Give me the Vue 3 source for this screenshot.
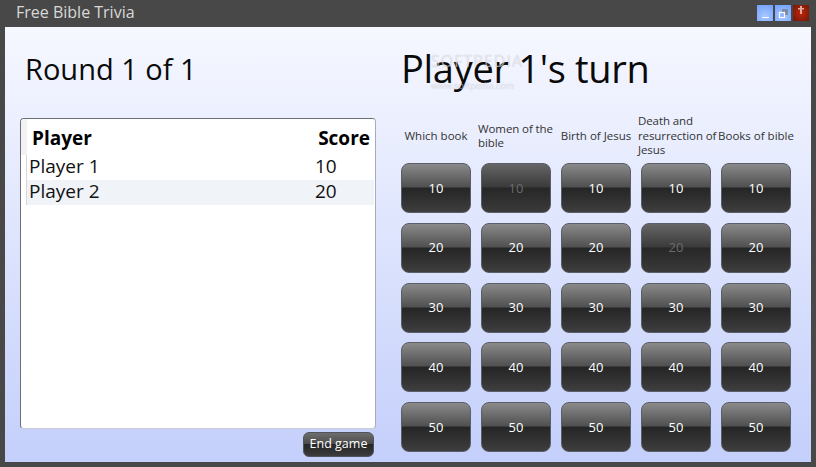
<template>
  <div class="window">
    <header class="titlebar">
      <span class="app-title">Free Bible Trivia</span>
      <div class="win-buttons">
        <button class="win-btn blue">
          <svg viewBox="0 0 16 16" width="16" height="16"><rect x="5" y="12" width="7" height="1" fill="#fff" /></svg>
        </button>
        <button class="win-btn blue">
          <svg viewBox="0 0 16 16" width="16" height="16">
            <rect x="7" y="4" width="6" height="6" fill="#7d8ba5" />
            <rect x="4.5" y="7.5" width="5" height="5" fill="#8db4ff" stroke="#fff" stroke-width="1.2" />
          </svg>
        </button>
        <button class="win-btn red">
          <svg viewBox="0 0 16 16" width="16" height="16">
            <rect x="7" y="1" width="2" height="8" fill="#e0a898" />
            <rect x="5" y="3" width="6" height="1.5" fill="#e0a898" />
          </svg>
        </button>
      </div>
    </header>

    <main class="content">
      <section class="left">
        <h1 class="round">Round 1 of 1</h1>
        <div class="table-box">
          <div class="table-head">
            <span>Player</span>
            <span>Score</span>
          </div>
          <div v-for="(p, i) in players" :key="p.name" :class="['row', { alt: i % 2 === 1 }]">
            <span class="row-name">{{ p.name }}</span>
            <span class="row-score">{{ p.score }}</span>
          </div>
        </div>
        <div class="actions">
          <button class="end-btn">End game</button>
        </div>
      </section>

      <section class="right">
        <div class="turn-wrap">
          <h1 class="turn">Player 1's turn</h1>
          <div class="mark">
            <span class="mark-big">SOFTPEDIA</span>
            <span class="mark-small">www.softpedia.com</span>
          </div>
        </div>
        <div class="cats">
          <div v-for="c in categories" :key="c.title" :class="['cat', { wrapped: c.wrapped }]">
            <span>{{ c.title }}</span>
          </div>
        </div>
        <div class="board">
          <template v-for="v in values" :key="v">
            <button
              v-for="(c, ci) in categories"
              :key="c.title"
              :class="['tile', { used: isUsed(v, ci) }]"
            >{{ v }}</button>
          </template>
        </div>
      </section>
    </main>
  </div>
</template>

<script setup>
const players = [
  { name: 'Player 1', score: 10 },
  { name: 'Player 2', score: 20 }
]

const categories = [
  { title: 'Which book' },
  { title: 'Women of the bible', wrapped: true },
  { title: 'Birth of Jesus' },
  { title: 'Death and resurrection of Jesus', wrapped: true },
  { title: 'Books of bible' }
]

const values = [10, 20, 30, 40, 50]

// questions already answered
const isUsed = (v, col) => (v === 10 && col === 1) || (v === 20 && col === 3)
</script>

<style>
html, body {
  margin: 0;
  background: #484848;
}
</style>

<style scoped>
.window {
  width: 816px;
  height: 467px;
  box-sizing: border-box;
  background: #484848;
  padding: 0 5px 5px;
  display: flex;
  flex-direction: column;
  font-family: "Open Sans", "Noto Sans", sans-serif;
  overflow: hidden;
}

.titlebar {
  height: 27px;
  flex: none;
  display: flex;
  justify-content: space-between;
  align-items: flex-start;
}

.app-title {
  margin-left: 11px;
  margin-top: 2px;
  font-size: 16px;
  line-height: 20px;
  color: #d8d8d8;
}

.win-buttons {
  display: flex;
  gap: 2px;
  margin-top: 5px;
  margin-right: 2px;
}

.win-btn {
  width: 16px;
  height: 16px;
  padding: 0;
  border: none;
  display: block;
}

.win-btn svg {
  display: block;
}

.blue {
  background: radial-gradient(circle at 50% 70%, #a9c8ff, #6f9fff);
}

.red {
  background: radial-gradient(circle at 50% 50%, #c02408, #6e1a08);
}

.content {
  flex: 1;
  display: flex;
  min-height: 0;
  background: linear-gradient(180deg, #f6f8ff 0%, #c4cffb 100%);
}

.left {
  width: 396px;
  flex: none;
  box-sizing: border-box;
  padding: 0 25px 0 15px;
  display: flex;
  flex-direction: column;
}

.round {
  margin: 24px 0 0 5px;
  height: 67px;
  font-size: 29px;
  line-height: 36px;
  font-weight: 400;
  color: #0a0a0a;
}

.table-box {
  width: 356px;
  height: 311px;
  box-sizing: border-box;
  background: #fff;
  border: 1px solid #6c6f78;
  border-bottom-color: #c8ccd8;
  border-right-color: #a8acb8;
  border-radius: 4px;
  padding-right: 1px;
  overflow: hidden;
}

.table-head {
  height: 36px;
  display: flex;
  justify-content: space-between;
  align-items: center;
  padding: 1px 4px 0 11px;
  box-sizing: border-box;
  font-size: 19px;
  font-weight: 700;
  color: #000;
  background: linear-gradient(90deg, #f2f2f2 6px, #fff 6px);
}

.row {
  height: 25px;
  box-sizing: border-box;
  padding: 0 0 3px 2px;
  margin-left: 5px;
  display: flex;
  align-items: center;
  font-size: 19px;
  color: #111;
  border-left: 1px solid #d8d8d8;
}

.row.alt {
  background: #f0f3f8;
}

.row-name {
  width: 286px;
}

.actions {
  display: flex;
  justify-content: flex-end;
  margin-top: 3px;
  padding-right: 2px;
}

.end-btn {
  width: 71px;
  height: 25px;
  padding: 0 0 2px;
  border: 1px solid #50545c;
  border-radius: 6px;
  background: linear-gradient(180deg, #6e6e6e 0%, #4a4a4a 48%, #262626 50%, #3c3c3c 100%);
  color: #fff;
  font-family: inherit;
  font-size: 12.5px;
}

.right {
  flex: 1;
  display: flex;
  flex-direction: column;
}

.turn-wrap {
  position: relative;
  height: 84px;
  flex: none;
}

.turn {
  margin: 14px 0 0;
  font-size: 38px;
  line-height: 54px;
  letter-spacing: -0.3px;
  font-weight: 400;
  color: #0a0a0a;
}

.mark {
  position: absolute;
  left: 30px;
  top: 24px;
  display: flex;
  flex-direction: column;
  color: rgba(255, 255, 255, 0.5);
  text-shadow: 0 0 1px rgba(120, 120, 130, 0.4);
}

.mark-big {
  font-size: 16px;
  line-height: 20px;
  letter-spacing: 1px;
}

.mark-small {
  font-size: 9px;
  line-height: 12px;
  margin-top: 9px;
}

.cats {
  height: 52px;
  flex: none;
  display: grid;
  grid-template-columns: repeat(5, 70px);
  column-gap: 10px;
}

.cat {
  display: flex;
  align-items: center;
  justify-content: center;
  margin: 0 -5px;
  padding-bottom: 2px;
  font-size: 11.5px;
  line-height: 14.5px;
  color: #333;
}

.cat.wrapped {
  justify-content: flex-start;
  margin: 0 -7px 0 -3px;
  letter-spacing: -0.1px;
}

.board {
  display: grid;
  grid-template-columns: repeat(5, 70px);
  grid-auto-rows: 50px;
  column-gap: 10px;
  row-gap: 9.75px;
}

.tile {
  padding: 0 0 1px;
  border: 1px solid #5a5e68;
  border-radius: 8px;
  background: linear-gradient(180deg, #8a8a8a 0%, #505050 48%, #252525 50%, #3e3e3e 100%);
  color: #fff;
  font-family: inherit;
  font-size: 13px;
}

.tile.used {
  background: linear-gradient(180deg, #666 0%, #3a3a3a 48%, #272727 50%, #3a3a3a 100%);
  color: #6a6a6a;
}
</style>
